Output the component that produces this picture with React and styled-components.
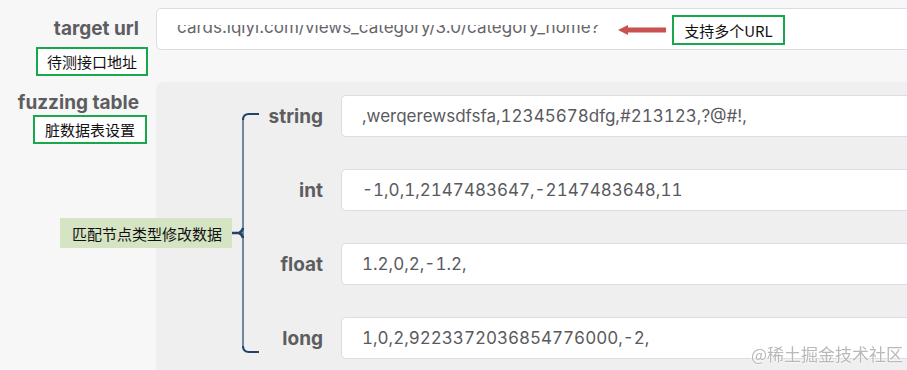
import React from 'react'
import styled, { createGlobalStyle } from 'styled-components'

const GlobalStyle = createGlobalStyle`
  html, body {
    margin: 0;
    padding: 0;
    background: #f7f7f7;
    overflow: hidden;
  }
  body {
    font-family: Inter, "Noto Sans", "Noto Sans CJK SC", sans-serif;
  }
`

const ui = {
  Page: styled.div`
    padding-top: 8px;
    margin-right: -16px;
    display: flex;
    flex-direction: column;
    gap: 6px;
  `,
  Row: styled.div`
    display: grid;
    grid-template-columns: 156px 1fr;
    align-items: start;
  `,
  LabelCell: styled.div`
    display: flex;
    flex-direction: column;
    align-items: flex-end;
    padding-top: 8px;
  `,
  Label: styled.div`
    padding-right: 17px;
    font-size: 19px;
    line-height: 26px;
    font-weight: 700;
    color: #5d5d61;
  `,
  Note: styled.div`
    margin-top: ${p => p.$top}px;
    margin-right: ${p => p.$right}px;
    width: ${p => p.$width}px;
    height: ${p => p.$height || 29}px;
    box-sizing: border-box;
    border: 2px solid #17a84b;
    background: #fff;
    display: flex;
    align-items: center;
    justify-content: center;
    font-family: "Noto Sans CJK SC", sans-serif;
    font-size: 15px;
    color: #111;
  `,
  Field: styled.div`
    position: relative;
    height: 42px;
    box-sizing: border-box;
    border: 1px solid #dcdde2;
    border-radius: 5px;
    background: #fff;
    display: flex;
    align-items: center;
    padding-left: 20px;
    font-size: 17px;
    font-variant-numeric: tabular-nums;
    color: #5a5a5e;
    white-space: nowrap;
  `,
  Clip: styled.div`
    height: 12px;
    margin-top: 4px;
    overflow: hidden;
    font-variant-numeric: normal;
  `,
  ClipText: styled.div`
    margin-top: -7px;
    line-height: 18px;
    color: #66666a;
  `,
  Callout: styled.div`
    position: absolute;
    left: 461px;
    top: 6px;
    display: flex;
    align-items: center;
    gap: 6px;
  `,
  Panel: styled.div`
    position: relative;
    background: #efefef;
    border-top-left-radius: 8px;
    padding: 13px 0 24px;
    display: flex;
    flex-direction: column;
    gap: 32px;
  `,
  TypeRow: styled.div`
    display: grid;
    grid-template-columns: 185px 1fr;
    align-items: center;
  `,
  TypeLabel: styled.div`
    text-align: right;
    padding-right: 18px;
    font-size: 19px;
    font-weight: 700;
    color: #5d5d61;
  `,
  Brace: styled.svg`
    position: absolute;
    left: 0;
    top: 0;
    pointer-events: none;
  `,
  Tag: styled.div`
    position: absolute;
    left: -96px;
    top: 136px;
    width: 172px;
    height: 30px;
    box-sizing: border-box;
    padding-left: 12px;
    background: #d5e4c2;
    display: flex;
    align-items: center;
    font-family: "Noto Sans CJK SC", sans-serif;
    font-size: 15px;
    color: #111;
  `,
  Watermark: styled.div`
    position: fixed;
    right: 4px;
    bottom: 4px;
    font-family: "Noto Sans CJK SC", sans-serif;
    font-size: 17px;
    color: #b9b9b9;
    text-shadow: 0 0 2px #fff, 0 0 2px #fff;
  `
}

const types = [
  { name: 'string', value: ',werqerewsdfsfa,12345678dfg,#213123,?@#!,' },
  { name: 'int', value: '-1,0,1,2147483647,-2147483648,11' },
  { name: 'float', value: '1.2,0,2,-1.2,' },
  { name: 'long', value: '1,0,2,9223372036854776000,-2,' }
]

function Arrow() {
  return (
    <svg width="48" height="12" viewBox="0 0 48 12">
      <rect x="8" y="3.5" width="40" height="5" fill="#c9514f" />
      <path d="M0 6 L10 1 L10 11 Z" fill="#c9514f" />
    </svg>
  )
}

export default function App() {
  return (
    <>
      <GlobalStyle />
      <ui.Page>
        <ui.Row>
          <ui.LabelCell>
            <ui.Label>target url</ui.Label>
            <ui.Note $top={5} $right={8} $width={112}>待测接口地址</ui.Note>
          </ui.LabelCell>
          <ui.Field>
            <ui.Clip>
              <ui.ClipText>cards.iqiyi.com/views_category/3.0/category_home?</ui.ClipText>
            </ui.Clip>
            <ui.Callout>
              <Arrow />
              <ui.Note $top={0} $right={0} $width={113} $height={30}>支持多个URL</ui.Note>
            </ui.Callout>
          </ui.Field>
        </ui.Row>
        <ui.Row>
          <ui.LabelCell>
            <ui.Label>fuzzing table</ui.Label>
            <ui.Note $top={-1} $right={9} $width={114}>脏数据表设置</ui.Note>
          </ui.LabelCell>
          <ui.Panel>
            <ui.Brace width="120" height="300" viewBox="0 0 120 300">
              <path d="M87 36 L87 266" stroke="#6f88a2" strokeWidth="2" fill="none" />
              <path d="M87 38 Q87 32 93 32 L103 32" stroke="#22426a" strokeWidth="2" fill="none" />
              <path d="M87 264 Q87 270 93 270 L103 270" stroke="#22426a" strokeWidth="2" fill="none" />
              <path d="M76 151 L83 151 Q86 150 87 146 M83 151 Q86 152 87 156" stroke="#22426a" strokeWidth="2.5" fill="none" />
            </ui.Brace>
            <ui.Tag>匹配节点类型修改数据</ui.Tag>
            {types.map(t => (
              <ui.TypeRow key={t.name}>
                <ui.TypeLabel>{t.name}</ui.TypeLabel>
                <ui.Field>{t.value}</ui.Field>
              </ui.TypeRow>
            ))}
          </ui.Panel>
        </ui.Row>
      </ui.Page>
      <ui.Watermark>@稀土掘金技术社区</ui.Watermark>
    </>
  )
}
